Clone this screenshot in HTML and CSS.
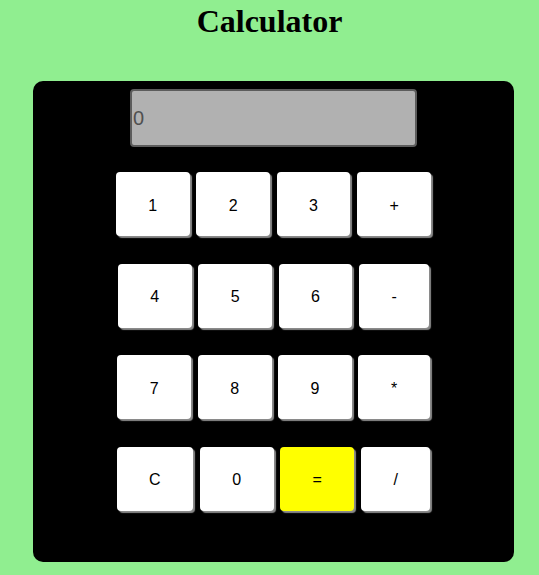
FILE: index.html
```html
<!DOCTYPE html>
<html>
<head>
<meta charset="utf-8">
<title>Calculator</title>
<link rel="stylesheet" href="styles.css">
</head>
<body>
<h1 class="title">Calculator</h1>
<div class="calc">
  <div class="display">0</div>
  <div class="keypad">
    <div class="row">
      <button class="key">1</button>
      <button class="key">2</button>
      <button class="key">3</button>
      <button class="key">+</button>
    </div>
    <div class="row">
      <button class="key">4</button>
      <button class="key">5</button>
      <button class="key">6</button>
      <button class="key">-</button>
    </div>
    <div class="row">
      <button class="key">7</button>
      <button class="key">8</button>
      <button class="key">9</button>
      <button class="key">*</button>
    </div>
    <div class="row">
      <button class="key">C</button>
      <button class="key">0</button>
      <button class="key key-equals">=</button>
      <button class="key">/</button>
    </div>
  </div>
</div>
</body>
</html>
```
FILE: styles.css
```css
html, body {
  margin: 0;
  padding: 0;
}
body {
  background: #90ee90;
  font-family: "Liberation Serif", serif;
}
.title {
  margin: 3px 0 0;
  text-align: center;
  font-size: 32px;
  font-weight: bold;
  color: #000;
  line-height: normal;
}
.calc {
  box-sizing: border-box;
  width: 481px;
  height: 481px;
  margin: 41px 0 0 33px;
  background: #000;
  border-radius: 10px;
  padding-top: 8px;
  display: flex;
  flex-direction: column;
  align-items: center;
}
.display {
  box-sizing: border-box;
  width: 287px;
  height: 58px;
  border: 2px solid #5c5c5c;
  border-radius: 4px;
  background: #b1b1b1;
  color: #505050;
  font-family: "Liberation Sans", Arial, sans-serif;
  font-size: 20px;
  padding-left: 1px;
  display: flex;
  align-items: center;
}
.keypad {
  margin-top: 25px;
  display: flex;
  flex-direction: column;
  gap: 27.67px;
}
.row {
  display: flex;
  justify-content: center;
  gap: 6.5px;
}
.key {
  height: 64px;
  padding: 0 32.5px 0;
  border: none;
  border-radius: 4px;
  background: #fff;
  box-shadow: 2px 2px 1px #8a8a8a;
  font-family: "Liberation Sans", Arial, sans-serif;
  font-size: 16px;
  color: #000;
  padding-top: 3px;
}
.key-equals {
  background: #ffff00;
}
```
